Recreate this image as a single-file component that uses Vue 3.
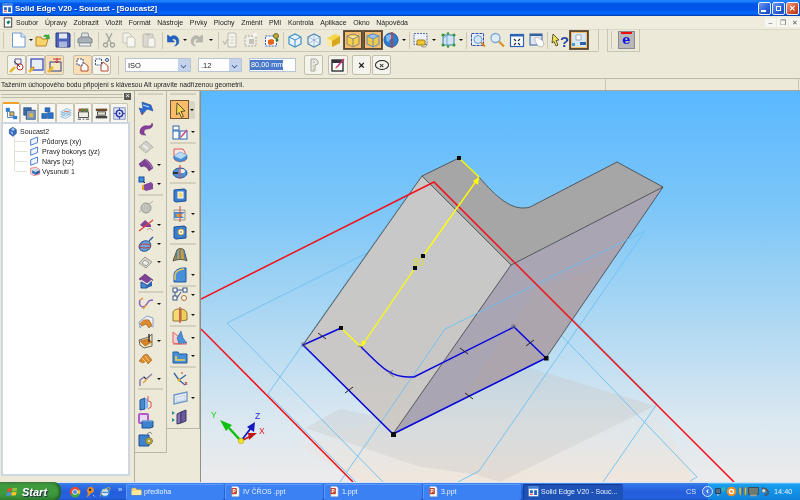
<script setup>
const I = {
  doc: '<path d="M1.5 1h9l3.500 3.500V15h-12.500z" transform="translate(1 0)" fill="#fff" stroke="#6f9bd8"/><path d="M11 1v4h4" fill="#e4edf9" stroke="#6f9bd8"/>',
  open: '<path d="M1 5h5l1 2h6l-2 7H1z" fill="#f6d36b" stroke="#b8862a"/><path d="M8 5c1-3 3-3 5-2l1-1 1 5-5 0 1.500-1.500C10.500 4.500 9 4.500 8 5z" fill="#3fa83c"/>',
  save: '<path d="M1 1h13l1 1v13H1z" fill="#4a63b8" stroke="#26387f"/><rect x="4" y="1.500" width="8" height="5" fill="#e4e8f4"/><rect x="4" y="9.500" width="8" height="5.500" fill="#aab6de"/>',
  print: '<path d="M5 1h6l1 5H4z" fill="#dfe3e6" stroke="#8d969c"/><path d="M1 7l3-2h8l3 2v4H1z" fill="#a9b1b7" stroke="#7c858c"/><path d="M3 11h10l1 3H2z" fill="#eef0f1" stroke="#8d969c"/>',
  cut: '<path d="M5 1l5 10M11 1l-5 10" stroke="#a5a59c" stroke-width="1.300" fill="none"/><circle cx="4.500" cy="13" r="2" fill="none" stroke="#a5a59c" stroke-width="1.300"/><circle cx="11.500" cy="13" r="2" fill="none" stroke="#a5a59c" stroke-width="1.300"/>',
  copy: '<path d="M2 1h6l2 2v8H2z" fill="#f2f1ea" stroke="#c5c3b7"/><path d="M6 5h6l2 2v8H6z" fill="#f7f6f0" stroke="#c5c3b7"/>',
  paste: '<rect x="2" y="2" width="10" height="13" rx="1" fill="#dcdad0" stroke="#bcbaae"/><rect x="5" y="1" width="4" height="3" fill="#c7c5ba"/><path d="M7 6h6l1 1v8H7z" fill="#f5f4ee" stroke="#c5c3b7"/>',
  undo: '<path d="M3.500 3v7h7L8 7.500C10 6 12 7 12.500 9.500c.5 2-.5 3.500-2 4.500 3.500-.5 5-3 4-6.500C13.500 3.500 9.500 2.500 6.500 5z" fill="#1f63c6" stroke="#134a9c" stroke-width=".5"/>',
  redo: '<path d="M12.500 3v7h-7L8 7.500C6 6 4 7 3.500 9.500c-.5 2 .5 3.500 2 4.500-3.500-.5-5-3-4-6.500C2.500 3.500 6.500 2.500 9.500 5z" fill="#b8b7ad" stroke="#a3a298" stroke-width=".5"/>',
  list: '<path d="M6 1h7l1 1v13H6z" fill="#f4f3ec" stroke="#bdbbaf"/><path d="M8 5h4M8 8h4M8 11h4" stroke="#cfcdc2"/><path d="M1 9l2 3 3-5" fill="none" stroke="#bdbbaf" stroke-width="1.300"/>',
  dash: '<rect x="2" y="4" width="11" height="10" fill="#efeee7" stroke="#aaa89c" stroke-dasharray="2 1"/><rect x="6" y="7" width="5" height="5" fill="#c4c2b8"/><path d="M12 1v4M10 3h4" stroke="#fff" stroke-width="1.200"/>',
  dashc: '<rect x="1.500" y="4" width="11" height="10" fill="#fff" stroke="#3a5fc0" stroke-dasharray="2 1"/><path d="M4 8l4-1 2 1v4l-4 1-2-1z" fill="#e8641c"/><circle cx="12" cy="4" r="2.500" fill="#c9a63a" stroke="#6a6a20"/><circle cx="13" cy="8" r="1.500" fill="#3d7a30"/>',
  wire: '<path d="M2 5l6-3 6 3v7l-6 3-6-3z" fill="#eaf3fb" stroke="#3d8fc9" stroke-width="1.200"/><path d="M2 5l6 3 6-3M8 8v7" fill="none" stroke="#3d8fc9"/>',
  wire2: '<path d="M2 5l6-3 6 3v7l-6 3-6-3z" fill="#f0f5fb" stroke="#4b86b8" stroke-width="1.200"/><path d="M2 5l6 3 6-3M8 8v7M8 2v6M2 12l6-4 6 4" fill="none" stroke="#7aa6cc" stroke-width=".7"/>',
  ycube: '<path d="M2 6l8-4 5 2v7l-8 4-5-3z" fill="#f5d54a"/><path d="M2 6l5 3v6l-5-3z" fill="#fbeaa0"/><path d="M7 9l8-5v7l-8 4z" fill="#d8a720"/>',
  ycube2: '<path d="M2 4l6-2 6 2v8l-6 3-6-3z" fill="#f4cf4c" stroke="#8b8676"/><path d="M2 4l6 3 6-3" fill="#fae89a" stroke="#8b8676"/><path d="M8 7v8" stroke="#8b8676"/>',
  ycube3: '<path d="M2 4l6-2 6 2v8l-6 3-6-3z" fill="#f0c84a" stroke="#5d8fc0"/><path d="M2 4l6-2 6 2-6 3z" fill="#9cc4ea" stroke="#5d8fc0"/><path d="M8 7v8" stroke="#5d8fc0"/>',
  globe: '<circle cx="8" cy="8" r="7" fill="#2c7fd0" stroke="#1c5aa0"/><path d="M3 4c2-2 6-2 7 0s-3 3-4 5-3 1-3-5z" fill="#7db8ee"/><path d="M9 0v16" stroke="#d8302a" stroke-width="1.500"/>',
  ydash: '<rect x="1" y="1.500" width="13" height="11" fill="#eef2f8" stroke="#5a6f9c" stroke-dasharray="2 1"/><rect x="4" y="8" width="8" height="5" rx="1" fill="#f3c534" stroke="#9a7a14"/><path d="M8 14c3 2 6 1 6-2" fill="none" stroke="#8f8f86"/>',
  gbox: '<path d="M3 3h11v10H3z" fill="#cfe4f4" stroke="#3d7fb8"/><path d="M7 3v10M3 7l4-4" stroke="#7aa6cc" fill="none"/><g fill="#2e9a2e"><circle cx="3" cy="3" r="1.500"/><circle cx="14" cy="3" r="1.500"/><circle cx="3" cy="13" r="1.500"/><circle cx="14" cy="13" r="1.500"/><circle cx="8" cy="1.500" r="1.200"/><circle cx="8" cy="14.500" r="1.200"/></g>',
  zarea: '<rect x="1.500" y="1.500" width="12" height="12" fill="#e8eefa" stroke="#2b4c9a" stroke-dasharray="3 1"/><circle cx="8" cy="7.500" r="4" fill="#d3e7f8" stroke="#6b9bd0"/><path d="M11 10.500l4 4" stroke="#d88a2a" stroke-width="2"/>',
  zoom: '<circle cx="6.500" cy="6" r="4.500" fill="#dcecf9" stroke="#7aa8d4" stroke-width="1.300"/><path d="M10 9.500l5 5" stroke="#d9902e" stroke-width="2.200"/>',
  fit: '<rect x="1.500" y="2.500" width="13" height="12" fill="#fff" stroke="#2a63b8" stroke-width="1.200"/><rect x="1.500" y="2" width="13" height="2.500" fill="#2a63b8"/><path d="M5 7l2 2M11 7L9 9M5 13l2-2M11 13l-2-2" stroke="#234" stroke-width="1.200"/>',
  pan: '<rect x="1" y="2" width="12" height="11" fill="#dde6f2" stroke="#33609c"/><rect x="1" y="2" width="12" height="2" fill="#33609c"/><path d="M6 6l2-1 6 4 1 3-2 3-4-1-3-5z" fill="#fff" stroke="#a5a5a5" stroke-width=".7"/>',
  helpa: '<path d="M1 2l6 6-3 .5L6 13l-2 1-2-4.500L0 11z" fill="#f2e24a" stroke="#222" stroke-width=".7"/><text x="8" y="15" font-family="Liberation Sans, sans-serif" font-weight="700" font-size="15" fill="#2a44a8">?</text>',
  twod: '<rect x="1" y="1" width="14" height="14" fill="#d7e7f4"/><rect x="9" y="10" width="6" height="3" fill="#2a62b0"/><rect x="1" y="11" width="3" height="3" fill="#4a9ad0"/><path d="M5 3h5v5H5z" fill="#fff" stroke="#9ab"/>',
  pick1: '<path d="M6 2h6v5H6z" fill="#f5f4f0" stroke="#5a5a9c"/><circle cx="11" cy="10" r="3" fill="#fff" stroke="#c03030"/><path d="M1 15l5-5" stroke="#e8b82a" stroke-width="2.500"/><path d="M5 4l6 6" stroke="#222" stroke-width=".8"/>',
  pick2: '<rect x="3" y="2" width="12" height="11" fill="#e8eef8" stroke="#3040b0" stroke-width="1.200"/><path d="M1 15l5-5" stroke="#e8b82a" stroke-width="2.500"/><path d="M5 10l1 1" stroke="#c03030"/>',
  pick3: '<rect x="3" y="5" width="11" height="9" fill="#f5e8c0" stroke="#2c3c90"/><path d="M6 2h8M10 1v4M8 4l2 2 2-2" stroke="#c03030" fill="none"/><path d="M1 15l5-5" stroke="#e8b82a" stroke-width="2.500"/>',
  hous1: '<path d="M8 5l5 4v5H6V9z" fill="#fff" stroke="#b84a30"/><rect x="2" y="2" width="6" height="6" fill="#fff" stroke="#34508c" stroke-dasharray="2 1"/>',
  hous2: '<path d="M9 5l5 4v5H7V9z" fill="#fff" stroke="#b84a30"/><rect x="1.500" y="2" width="6" height="6" fill="#fff" stroke="#34508c" stroke-dasharray="2 1"/><circle cx="13" cy="3" r="1.500" fill="none" stroke="#34508c"/>',
  dim: '<path d="M5 2h5l2 2v3l-3 1v6H5z" fill="#eceae0" stroke="#a8a69a"/><path d="M7 5h2M7 9h1M7 12h1" stroke="#a8a69a"/>',
  note: '<rect x="2" y="3" width="11" height="11" fill="#fff" stroke="#222" stroke-width="1.300"/><rect x="2" y="3" width="11" height="3" fill="#333"/><path d="M6 11l8-9" stroke="#d03080" stroke-width="1.500"/><path d="M5 12l1-2 1 1z" fill="#e0b020"/>',
  ribbon: '<path d="M4 1l9 3 2 6-6-2-5 6-3-7 4 1z" fill="#2a6ad0" stroke="#143c88" stroke-width=".5"/><path d="M5 4l6 2" stroke="#cfe2fa"/><path d="M4 14l2-3" stroke="#d05030"/>',
  twist: '<path d="M2 12c0-5 4-7 8-6 2 0 4-1 4-3 2 3-1 6-5 6-2 0-3 1-3 3 0 2 1 3 2 3-3 0-6 0-6-3z" fill="#8a3e9c" stroke="#56206c" stroke-width=".5"/>',
  diamond: '<path d="M8 2l7 6-7 6-7-6z" fill="#d0d0c8" stroke="#a09f94" stroke-dasharray="2 1"/><path d="M5 6l5 4" stroke="#efefe8" stroke-width="2"/>',
  purp: '<path d="M1 7l6-5c3 1 6 4 8 9l-4 3C9 10 6 8 3 10z" fill="#7e4394" stroke="#4c2468" stroke-width=".5"/><path d="M7 2c2 2 5 5 7 9" stroke="#b27cc4" fill="none"/>',
  purp2: '<rect x="1" y="1" width="5" height="5" fill="#3d8fe0" stroke="#1a4f9c"/><path d="M5 9l8-3 2 2v5l-7 2-3-2z" fill="#8248a0"/><path d="M5 5l2 2" stroke="#222"/><path d="M5 9v5" stroke="#e8a020" stroke-width="2"/>',
  ball: '<circle cx="8" cy="9" r="5" fill="#c0c0bc" stroke="#9a9a94"/><path d="M5 7c1-1 2-1 3 0" stroke="#eee"/><path d="M10 6l5-4M1 13l3-2" stroke="#b0b0a8"/>',
  purx: '<path d="M2 8l5-5 6 5v2H5z" fill="#7e4394"/><path d="M1 14L15 3" stroke="#e0403a" stroke-width="1.200"/><path d="M9 13l3-2 3 3" fill="none" stroke="#a5a5a0"/>',
  disc: '<ellipse cx="7" cy="10" rx="6" ry="5" transform="rotate(-25 7 10)" fill="#6ea4dc" stroke="#1f5aa4"/><ellipse cx="7" cy="10" rx="6" ry="2" fill="none" stroke="#c03838"/><path d="M11 5l4-4" stroke="#2c4c9c" stroke-width="1.200"/>',
  gdiam: '<path d="M1 9l6-6 7 5-6 6z" fill="#d4d4cc" stroke="#a0a096"/><path d="M4 9l3-3 4 3-3 3z" fill="#eeeee6" stroke="#a0a096"/>',
  roof: '<path d="M1 6l6-5 8 6-6 4z" fill="#7e4394" stroke="#3a1a54" stroke-width=".5"/><path d="M3 9l6 3v3H3z" fill="#4c8ad0" stroke="#1f4f9a"/><path d="M9 12l5-4v5l-5 2z" fill="#2a64b0"/><path d="M3 7l6 4 5-4" stroke="#fff" fill="none"/>',
  curve: '<path d="M2 4c-2 6 3 9 6 5s3-5 7-5" fill="none" stroke="#8b5fc0" stroke-width="1.500"/><path d="M2 4l3-2" stroke="#e09030" stroke-width="1.500"/><path d="M5 13l3-4" stroke="#e0a040" stroke-width="1.500"/>',
  sweep: '<path d="M1 8l8-6 6 2v9L5 9l-3 5z" fill="#f3eef0" stroke="#8aa0c8"/><path d="M2 10c2-4 6-5 9-4l3 5-3 3-3-4-4 2z" fill="#de8a2c" stroke="#8a5018" stroke-width=".5"/>',
  sweep2: '<path d="M1 7l10-3 3-3v12l-8 2-4-3z" fill="#f4e8b8" stroke="#666"/><path d="M2 8l8-2 4 3-7 4z" fill="#d88426" stroke="#8a5018" stroke-width=".5"/><path d="M11 1v8" stroke="#222" stroke-width="1.300"/>',
  sweep3: '<path d="M1 10l5-6 3-1 5 6-4 4-2-3-3 2z" fill="#dc8a2a" stroke="#885016" stroke-width=".5"/><path d="M4 7l5 5M7 5l4 5" stroke="#f5cc80"/>',
  branch: '<path d="M2 15V9l4-3 2 2 6-5" fill="none" stroke="#8b7cac" stroke-width="1.500"/><path d="M5 12l4-4" stroke="#e0a040" stroke-width="1.500"/><path d="M6 6l2 2" stroke="#222"/>',
  bfold: '<path d="M2 5l5-2v11l-5 1z" fill="#4a88d0" stroke="#1f4f9a"/><path d="M7 3l3 1v9l-3 1z" fill="#8ab8ea"/><path d="M10 1v5l3 1v5l-3 2" fill="none" stroke="#d85050"/>',
  bpurp: '<rect x="1" y="1" width="9" height="9" rx="1" fill="#e8d8f0" stroke="#b05cc8" stroke-width="2"/><path d="M4 8h11v6l-3 1H4z" fill="#3c82cc" stroke="#1f4f9a"/><path d="M4 8h11" stroke="#8cc0ee"/>',
  bgear: '<path d="M1 4h10v11H1z" fill="#3c82cc" stroke="#1f4f9a"/><circle cx="11" cy="10" r="3.500" fill="#b0a038" stroke="#555" stroke-dasharray="1 1"/><circle cx="11" cy="10" r="1" fill="#eee"/><path d="M9 3l3-2 2 2" fill="none" stroke="#888"/>',
  arrow: '<path d="M5 1l8 8-4 .5 2.500 5-2 1L7 10.500 4.500 13z" fill="#f3d94a" stroke="#333" stroke-width=".8"/>',
  plan: '<rect x="1" y="2" width="6" height="4" fill="#fff" stroke="#2a64b8"/><rect x="1" y="7" width="6" height="8" fill="#fff" stroke="#2a64b8"/><rect x="8" y="7" width="7" height="8" fill="#fff" stroke="#2a64b8"/><path d="M9 13l6-7" stroke="#d04080" stroke-width="1.400"/><path d="M8 14l1-1 1 1z" fill="#e0b020"/>',
  prot: '<path d="M2 2h9l2 3v9H4l-2-3z" fill="#f5e6e6" stroke="#e05858"/><path d="M2 9l6-4 7 3v4l-7 3-6-3z" fill="#4a90d8" stroke="#1f5aa0" stroke-width=".5"/><path d="M2 9l7 3 6-4-7-3z" fill="#b8d8f2"/>',
  revo: '<ellipse cx="8" cy="9" rx="7" ry="5" fill="#4a90d8" stroke="#1f5aa0"/><ellipse cx="10" cy="7" rx="3" ry="2" fill="#eee"/><path d="M1 9h5" stroke="#333" stroke-width="2"/><path d="M8 1v14" stroke="#e05050" stroke-width="1.300"/>',
  boss: '<path d="M2 3l10-1 2 1v11l-10 1-2-1z" fill="#3a7ecc" stroke="#1c4f9a"/><rect x="6" y="5" width="5" height="6" fill="#f4d76a" stroke="#fff"/>',
  hole: '<path d="M2 4h11v10H2z" fill="#e8e4d8" stroke="#9a9a90"/><path d="M2 6h11l-4 3 3 3H2z" fill="#4c8ad0"/><path d="M4 8h7l-3 2 2 1H5z" fill="#d8a030"/><path d="M8 0v16" stroke="#e04040"/>',
  ring: '<path d="M2 3l10-1 2 1v11l-10 1-2-1z" fill="#3a7ecc" stroke="#1c4f9a"/><circle cx="9" cy="8" r="3" fill="#fff" stroke="#c8a040"/><circle cx="9" cy="8" r="1" fill="#c8a040"/>',
  tent: '<path d="M1 14L5 3c2-2 5-2 7 0l3 11c-3-2-10-2-14 0z" fill="#c89a3c" stroke="#50503c"/><path d="M8 2v10M5 3l-1 10M12 3l1 10" stroke="#3a7ecc" stroke-width="1.200"/>',
  bowl: '<path d="M2 15V8C2 4 6 1 12 1h2v14z" fill="#4a90d8" stroke="#1f5aa0"/><path d="M3 13V8c0-3 4-6 9-6" fill="none" stroke="#e8c860" stroke-width="1.500"/>',
  nodes: '<g fill="#fff" stroke="#35508c"><rect x="1" y="1" width="4" height="4"/><rect x="11" y="1" width="4" height="4"/><rect x="1" y="9" width="4" height="4"/><circle cx="12" cy="11" r="2.500" stroke="#a86a20"/></g><path d="M5 3h6M3 5v4M5 11l4-6" stroke="#35508c" fill="none"/>',
  yhalf: '<path d="M1 14V6c0-3 3-4 6-4h1v12z" fill="#f4da70" stroke="#8a7a3a"/><path d="M9 2c3 0 6 2 6 5v6l-6 1z" fill="#f0cd5a" stroke="#8a7a3a"/><path d="M8 0v16" stroke="#e04040" stroke-width="1.300"/>',
  sheet: '<path d="M1 2l6 5v7l-6-1z" fill="#f6d0d0" stroke="#e06060"/><path d="M5 8l4-7 2 7 4 5-8 1z" fill="#4a90d8" stroke="#1f5aa0" stroke-width=".5"/><path d="M1 14h14" stroke="#e06060"/>',
  flange: '<path d="M1 4h5l1 2h8v9H1z" fill="#4a90d8" stroke="#1f5aa0"/><path d="M4 8v4h9" fill="none" stroke="#f0d040" stroke-width="1.600"/>',
  triad: '<path d="M7 9L2 2M7 9l7-5M7 9l6 5" stroke="#3464a8" stroke-width="1.300"/><circle cx="7" cy="9" r="1.500" fill="#e0b020"/><path d="M9 2h2M13 11l2 3M13 14l2-3" stroke="#c04040"/>',
  panel: '<path d="M2 5l13-3v9L2 14z" fill="#f3f4f6" stroke="#6a94c8" stroke-width="1.300"/><path d="M4 7l9-2v5l-9 2z" fill="#dde8f4" stroke="#a0b8d4" stroke-width=".5"/>',
  fold: '<path d="M0 2l3 2-3 2zM0 9l3 2-3 2z" fill="#2a8fa0"/><path d="M5 5l4-2v11l-4 1z" fill="#8a70b0" stroke="#3c3868"/><path d="M9 3l5-2v11l-5 2z" fill="#6a5a9c" stroke="#3c3868"/>',
  tree1: '<rect x="1" y="1" width="5" height="5" fill="#2f7fd0"/><rect x="6" y="6" width="5" height="5" fill="#e8b83a" stroke="#2a5fa8"/><rect x="10" y="11" width="5" height="4" fill="#2f7fd0"/><path d="M3 6v7h7" stroke="#3c6a9c" fill="none"/>',
  tree2: '<rect x="1" y="1" width="9" height="9" fill="#3c70b0" stroke="#234a80"/><rect x="4" y="4" width="11" height="11" fill="#8a9db8" stroke="#234a80"/><rect x="8" y="8" width="4" height="4" fill="#e8c030"/>',
  tree3: '<path d="M5 1h6v5H5zM1 8h6v6H1zM8 7h7v7H8z" fill="#2a72cc" stroke="#174c94" stroke-width=".7"/>',
  tree4: '<path d="M2 6l7-4 6 2-7 4z M2 9l7-4 6 2-7 4z M2 12l7-4 6 2-7 4z" fill="#e6f0f8" stroke="#6ea8d4" stroke-width=".8"/><path d="M6 5l6 1" stroke="#e06a40"/>',
  tree5: '<rect x="2" y="2" width="12" height="3" fill="#c04040"/><rect x="5" y="2" width="3" height="5" fill="#3c9c3c"/><rect x="10" y="2" width="3" height="5" fill="#3c9c3c"/><rect x="2" y="6" width="12" height="7" fill="#f0eee4" stroke="#333"/><path d="M1 15h4M7 15h2M11 15h4" stroke="#333"/>',
  tree6: '<rect x="1" y="2" width="14" height="3" fill="#6a4a2a"/><rect x="3" y="6" width="10" height="4" fill="#e8e4d4" stroke="#333"/><rect x="1" y="11" width="14" height="3" fill="#444"/>',
  tree7: '<rect x="1" y="1" width="14" height="14" fill="#dfe6f8" stroke="#6c7cb8"/><circle cx="8" cy="8" r="4" fill="#fff" stroke="#2c3ea8" stroke-width="2"/><circle cx="8" cy="8" r="1.400" fill="#2c3ea8"/><path d="M8 1v3M8 12v3M1 8h3M12 8h3" stroke="#2c3ea8"/>',
  root: '<path d="M2 5l5-3 5 3v6l-5 4-5-4z" fill="#3a6fc0" stroke="#1d4a8f"/><path d="M5 4l3-1 2 2-2 2-3-1zM3 8l4 1v4z" fill="#a9c5ea"/>',
  plane: '<path d="M1 5.500l10-4v8l-10 4z" fill="#eef5ff" stroke="#1c58c8" stroke-width="1.100"/>',
  ext: '<path d="M1 3l8-1 5 3v7l-9 2-4-3z" fill="#f8e0e0" stroke="#e06060"/><path d="M3 6l6-2 5 2-6 3z" fill="#b6d4f0"/><path d="M3 6l5 3v4l-5-3z" fill="#3070c0"/><path d="M8 9l6-3v4l-6 3z" fill="#1f5aa0"/>',
  mfile: '<rect x="1.500" y="1" width="9" height="11" fill="#fff" stroke="#222"/><path d="M4 6l3-2 2 2-3 3z" fill="#167a6a"/>',
  win: '<rect x="1" y="1" width="14" height="14" fill="#f4f8ff"/><rect x="1" y="1" width="14" height="3" fill="#3b7cd8"/><path d="M3 6l4 0v4H3zM9 6h4v7H9z" fill="#1c60b8"/><path d="M3 11h4v2H3z" fill="#e05050"/>',
  ppt: '<path d="M3 1h8l2 2v12H3z" fill="#fff" stroke="#d8cfc4"/><rect x="2" y="3" width="8" height="9" rx="1" fill="#c2432c"/><text x="3.500" y="10.500" font-family="Liberation Sans, sans-serif" font-weight="700" font-size="7" fill="#fff">P</text>',
  folder: '<path d="M1 4l1-1h5l1 2h6l1 1v7H1z" fill="#f5d878" stroke="#b89640" stroke-width=".7"/><path d="M1 7h14v6H1z" fill="#fbe79e"/>',
  chrome: '<circle cx="8" cy="8" r="7" fill="#e8482e"/><path d="M8 8l6.500 3A7 7 0 0 1 2 12z" fill="#3da54a"/><path d="M8 8l6.500 3A7 7 0 0 0 14.700 5.500H8z" fill="#f6c526"/><circle cx="8" cy="8" r="3.300" fill="#4a8ee6" stroke="#fff"/>',
  gimp: '<path d="M8 1c4 0 6 3 5 6-1 3-4 2-5 4-1 2-3 4-5 3 2-1 2-2 2-4s-1-2-1-4 2-5 4-5z" fill="#e88a2a"/><circle cx="8" cy="5" r="1.500" fill="#222"/><path d="M12 12l2 2" stroke="#ddd"/>',
  ie: '<circle cx="8" cy="8.500" r="5.500" fill="#cfe6fb" stroke="#2f82d8" stroke-width="2"/><path d="M4 8.500h8" stroke="#2f82d8" stroke-width="1.500"/><path d="M2 14c-1-3 5-10 11-12 2 0 2 2 1 4" fill="none" stroke="#e8b830" stroke-width="1.200"/>',
  xp: '<path d="M1 4c3-2 4 0 6-1l-1 5C4 9 3 7 0 9z" fill="#e8502e"/><path d="M8 3c2-1 4 1 7-1l-1 5c-3 2-5 0-7 1z" fill="#8ac43c"/><path d="M0 10c3-2 4 0 6-1l-1 5c-2 1-3-1-6 1z" fill="#4a90e0"/><path d="M7 9c2-1 4 1 7-1l-1 5c-3 2-5 0-7 1z" fill="#f6c52a"/>',
  net: '<rect x="1" y="4" width="7" height="7" fill="#5a6f8c" stroke="#223"/><rect x="3" y="12" width="3" height="2" fill="#bbb"/><path d="M10 7c1-1 1-3 0-4M12 8c2-2 2-5 0-7" stroke="#7ce05c" fill="none"/>',
  oring: '<circle cx="8" cy="8" r="7" fill="#f08a20"/><circle cx="8" cy="8" r="3" fill="none" stroke="#fff" stroke-width="2"/>',
  tune: '<path d="M3 2v8c0 3 3 4 3 4V2zM11 2v12s3-1 3-4V2z" fill="#e8b83a" stroke="#6a5a2a" stroke-width=".5"/><path d="M8 1v11" stroke="#3a5fb0" stroke-width="1.500"/>',
  disp: '<rect x="1" y="2" width="14" height="10" fill="#6e7a70" stroke="#333"/><rect x="3" y="12" width="10" height="3" fill="#9a9a90"/>',
  vol: '<path d="M4 3c4 0 8 2 9 5s-1 6-5 5" fill="none" stroke="#555" stroke-width="2.500"/><circle cx="7" cy="7" r="3" fill="#ddd" stroke="#555"/>'
}

const btn = (c, i, on, w = 18) => ({ k: 'btn', c, i, on, w })
const drop = c => ({ k: 'drop', c, w: 5 })
const sep = (c, w = 1) => ({ k: 'sep', c, w })

function flow(items, start = 0) {
  let pos = start
  return items.map(it => {
    const from = it.c - it.w / 2
    const out = { ...it, gap: from - pos }
    pos = from + it.w
    return out
  })
}

const row1 = flow([
  sep(3), btn(18, 'doc'), drop(31), btn(44, 'open'), btn(64, 'save'), sep(75), btn(86, 'print'), sep(99), btn(110, 'cut'), btn(130, 'copy'), btn(150, 'paste'),
  sep(163), btn(173, 'undo'), drop(186), btn(200, 'redo'), drop(213), sep(221), btn(233, 'list'), btn(254, 'dash'), btn(275, 'dashc'), sep(286),
  btn(298, 'wire'), btn(317, 'wire2'), btn(336, 'ycube'), btn(356, 'ycube2', 1), btn(375.500, 'ycube3', 1), btn(394, 'globe'), drop(407), sep(413), btn(425, 'ydash'), drop(438), btn(453, 'gbox'), drop(466), sep(472),
  btn(484, 'zarea'), btn(503, 'zoom'), btn(523, 'fit'), btn(543, 'pan'), sep(553), btn(566, 'helpa'), btn(585, 'twod', 1)
])

const row2 = [
  { i: 'pick1', w: 19 }, { i: 'pick2', w: 19 }, { i: 'pick3', w: 19, soft: 1 }
]
const row2b = [
  { i: 'hous1', w: 19, soft: 1 }, { i: 'hous2', w: 19 }
]

const col1 = flow([
  sep(93, 2), btn(108, 'ribbon'), btn(127, 'twist'), btn(146, 'diamond'), { ...btn(164, 'purp'), a: 1 }, { ...btn(183, 'purp2'), a: 1 }, sep(194, 2),
  btn(206, 'ball'), { ...btn(224, 'purx'), a: 1 }, { ...btn(243, 'disc'), a: 1 }, { ...btn(261, 'gdiam'), a: 1 }, btn(280, 'roof'), sep(291, 2),
  { ...btn(303, 'curve'), a: 1 }, btn(321, 'sweep'), { ...btn(340, 'sweep2'), a: 1 }, btn(358, 'sweep3'), { ...btn(378, 'branch'), a: 1 }, sep(388, 2),
  btn(402, 'bfold'), btn(420, 'bpurp'), btn(438, 'bgear')
], 90)

const col2 = flow([
  sep(93, 2), { ...btn(108.500, 'arrow', 1, 19), a: 2 }, { ...btn(131, 'plan'), a: 1 }, sep(142, 2),
  btn(154, 'prot'), { ...btn(171, 'revo'), a: 1 }, sep(182, 2),
  btn(194, 'boss'), { ...btn(213, 'hole'), a: 1 }, { ...btn(231, 'ring'), a: 1 }, sep(243, 2),
  btn(254, 'tent'), { ...btn(274, 'bowl'), a: 1 }, sep(285, 2),
  { ...btn(294, 'nodes'), a: 1 }, { ...btn(314, 'yhalf'), a: 1 }, sep(325, 2),
  { ...btn(337, 'sheet'), a: 1 }, { ...btn(355, 'flange'), a: 1 }, sep(366, 2),
  btn(378, 'triad'), { ...btn(397, 'panel'), a: 1 }, btn(416, 'fold')
], 90)

const menu = ['Soubor', 'Úpravy', 'Zobrazit', 'Vložit', 'Formát', 'Nástroje', 'Prvky', 'Plochy', 'Změnit', 'PMI', 'Kontrola', 'Aplikace', 'Okno', 'Nápověda']
const tabs = ['tree1', 'tree2', 'tree3', 'tree4', 'tree5', 'tree6', 'tree7']
const tree = [
  { t: 'Půdorys (xy)', i: 'plane' }, { t: 'Pravý bokorys (yz)', i: 'plane' }, { t: 'Nárys (xz)', i: 'plane' }, { t: 'Vysunutí 1', i: 'ext' }
]
const tasks = [
  { t: 'předloha', i: 'folder' }, { t: 'IV ČŘOS .ppt', i: 'ppt' }, { t: '1.ppt', i: 'ppt' }, { t: '3.ppt', i: 'ppt' }, { t: 'Solid Edge V20 - Souc...', i: 'win', on: 1 }
]
const ticks = [[322, 335, 1], [349, 389, -1], [464, 350, 1], [469, 395, 1], [530, 342, -1]]
</script>

<template>
  <div class="app">
    <header class="title">
      <svg class="ic t" viewBox="0 0 16 16" v-html="I.win"></svg>
      <span class="title-text">Solid Edge V20 - Soucast - [Soucast2]</span>
      <span class="wb blue"><i class="w-min"></i></span>
      <span class="wb blue"><i class="w-max"></i></span>
      <span class="wb red">✕</span>
    </header>

    <nav class="menu">
      <svg class="mfile" viewBox="0 0 12 13" v-html="I.mfile"></svg>
      <span v-for="m in menu" :key="m" class="mi">{{ m }}</span>
      <span class="mdi">
        <b class="mb">–</b><b class="mb">❐</b><b class="mb">✕</b>
      </span>
    </nav>

    <div class="row1">
      <div class="tb1">
        <template v-for="(it, n) in row1" :key="n">
          <span v-if="it.k === 'sep'" class="vsep" :style="{ marginLeft: it.gap + 'px' }"></span>
          <span v-else-if="it.k === 'drop'" class="drop" :style="{ marginLeft: it.gap + 'px' }"></span>
          <span v-else class="tool" :class="{ on: it.on }" :style="{ marginLeft: it.gap + 'px' }">
            <svg class="ic" viewBox="0 0 16 16" v-html="I[it.i]"></svg>
          </span>
        </template>
      </div>
      <div class="tb2">
        <span class="grip"></span>
        <span class="elogo"><i></i>e</span>
      </div>
    </div>

    <div class="row2">
      <div class="group g1">
        <span v-for="b in row2" :key="b.i" class="raised" :class="{ soft: b.soft }"><svg class="ic" viewBox="0 0 16 16" v-html="I[b.i]"></svg></span>
      </div>
      <div class="group g2">
        <span v-for="b in row2b" :key="b.i" class="raised" :class="{ soft: b.soft }"><svg class="ic" viewBox="0 0 16 16" v-html="I[b.i]"></svg></span>
      </div>
      <span class="vsep tall"></span>
      <div class="select s1"><span>ISO</span><i class="caret"></i></div>
      <div class="select s2"><span>.12</span><i class="caret"></i></div>
      <div class="value"><span class="hl">80,00 mm</span></div>
      <span class="raised r1"><svg class="ic" viewBox="0 0 16 16" v-html="I.dim"></svg></span>
      <span class="raised r2"><svg class="ic" viewBox="0 0 16 16" v-html="I.note"></svg></span>
      <span class="raised r3"><b>×</b></span>
      <span class="raised r4"><b class="circ">×</b></span>
    </div>

    <div class="status">
      <span class="st1">Tažením úchopového bodu připojení s klávesou Alt upravíte nadřízenou geometrii.</span>
      <span class="st2"></span>
    </div>

    <main class="work">
      <aside class="left">
        <div class="lhead"><span class="lgrip"></span><span class="lclose">×</span></div>
        <div class="tabs">
          <span v-for="(t, n) in tabs" :key="t" class="tab" :class="{ act: n === 0 }"><svg class="ic" viewBox="0 0 16 16" v-html="I[t]"></svg></span>
        </div>
        <div class="tree">
          <div class="trow root"><svg class="ic" viewBox="0 0 16 16" v-html="I.root"></svg><span>Soucast2</span></div>
          <div class="tlist">
            <div v-for="r in tree" :key="r.t" class="trow leaf"><i class="tl"></i><svg class="ic s" viewBox="0 0 16 16" v-html="I[r.i]"></svg><span>{{ r.t }}</span></div>
          </div>
        </div>
      </aside>

      <div class="col c1">
        <div class="colin">
          <template v-for="(it, n) in col1" :key="n">
            <span v-if="it.k === 'sep'" class="hsep" :style="{ marginTop: it.gap + 'px' }"></span>
            <div v-else class="slot" :style="{ marginTop: it.gap + 'px' }">
              <svg class="ic" viewBox="0 0 16 16" v-html="I[it.i]"></svg>
              <span v-if="it.a" class="drop"></span>
            </div>
          </template>
        </div>
      </div>
      <div class="col c2">
        <div class="colin">
          <template v-for="(it, n) in col2" :key="n">
            <span v-if="it.k === 'sep'" class="hsep" :style="{ marginTop: it.gap + 'px' }"></span>
            <div v-else class="slot" :class="{ sel: it.on }" :style="{ marginTop: it.gap + 'px' }">
              <span v-if="it.on" class="selbox"><svg class="ic" viewBox="0 0 16 16" v-html="I[it.i]"></svg></span>
              <svg v-else class="ic" viewBox="0 0 16 16" v-html="I[it.i]"></svg>
              <span v-if="it.a" class="drop" :class="{ pill: it.a === 2 }"></span>
            </div>
          </template>
        </div>
      </div>

      <svg class="canvas" viewBox="201 90 599 391">
        <defs>
          <linearGradient id="sky" x1="0" y1="0" x2="0" y2="1">
            <stop offset="0" stop-color="#5ab8ff" />
            <stop offset=".3" stop-color="#7cc6f8" />
            <stop offset=".62" stop-color="#b4daf2" />
            <stop offset=".85" stop-color="#dce8f0" />
            <stop offset="1" stop-color="#ecebec" />
          </linearGradient>
          <linearGradient id="floor" x1="0" y1="0" x2="0" y2="1">
            <stop offset="0" stop-color="#e6e0d6" stop-opacity="0" />
            <stop offset=".65" stop-color="#e8e2d8" stop-opacity=".3" />
            <stop offset="1" stop-color="#f0e6dc" stop-opacity=".95" />
          </linearGradient>
          <linearGradient id="lf" x1="0" y1="0" x2="0" y2="1">
            <stop offset="0" stop-color="#c8c8c8" />
            <stop offset=".7" stop-color="#c9c8c7" />
            <stop offset="1" stop-color="#cfcac5" />
          </linearGradient>
        </defs>
        <rect x="201" y="90" width="599" height="391" fill="url(#sky)" />
        <path d="M300 445L530 366L655 405L695 481H360z" fill="url(#floor)" />
        <path d="M305 427L340 408L392 418L530 367L655 405L500 481L478 474L417 465z" fill="#b9b8b0" opacity=".22" />

        <g fill="none" stroke="#6cc0f2" stroke-width=".9">
          <path d="M425 169L268 393L356 481" />
          <path d="M425 169L657 403L603 481" />
          <path d="M445 213L227 322L383 481" />
          <path d="M445 213L697 476L690 480" />
        </g>

        <path d="M422 175L511 264L393 433L303 344z" fill="url(#lf)" />
        <path d="M422 175L459 157L479 176C497 197 510 207 523 207C528 207 531 206 534 204L617 161L663 186L511 264z" fill="#a6a6a6" />
        <path d="M511 264L663 186L546 357L393 433z" fill="#a9a5b3" />
        <path d="M537 287L603 266L546 357L460 400z" fill="#b8a4a0" opacity=".28" />
        <path d="M422 175L459 157L479 176C497 197 510 207 523 207C528 207 531 206 534 204L617 161L663 186L546 357L393 433L303 344z" fill="none" stroke="#4c4c4c" stroke-width=".9" />
        <path d="M422 175L511 264L393 433M511 264L663 186" fill="none" stroke="#4c4c4c" stroke-width=".9" />

        <g fill="none" stroke="#6cc0f2" stroke-width=".9">
          <path d="M340 481L445 328L645 230L479 470L458 481" />
        </g>

        <g fill="none" stroke="#f2101a" stroke-width="1.500">
          <path d="M201 298L434 181L734 481" />
          <path d="M201 328L353 481" />
        </g>

        <g fill="none" stroke="#ffff00" stroke-width="1.300">
          <path d="M341 327L361 346" />
          <path d="M361 346L415 267M423 255L479 176" />
          <path d="M459 157L479 176" />
        </g>
        <path d="M361 346L362 339L366 342z" fill="#ffff00" />
        <path d="M479 176L478 184L473 180z" fill="#ffff00" />
        <text x="413" y="265" class="dimtext">80</text>

        <path d="M361 346C378 362 388 376 408 376L414 376L514 326L546 357L393 433L303 344L341 327" fill="none" stroke="#0a0ade" stroke-width="1.500" />

        <g stroke="#222" stroke-width="1">
          <path v-for="t in ticks" :key="t[0]" :d="`M${t[0] - 4} ${t[1] - 3 * t[2]}L${t[0] + 4} ${t[1] + 3 * t[2]}`" />
        </g>
        <g fill="#0b0b0b">
          <rect x="457" y="155" width="4" height="4" />
          <rect x="339" y="325" width="4" height="4" />
          <rect x="391" y="431" width="5" height="5" />
          <rect x="544" y="355" width="4.500" height="4.500" />
          <rect x="413" y="265" width="4" height="4" />
          <rect x="421" y="253" width="4" height="4" />
        </g>
        <g fill="none" stroke="#666" stroke-width=".8">
          <rect x="302" y="342" width="3" height="3" />
          <rect x="512" y="324" width="3" height="3" />
          <path d="M393 369L389 372L394 376" />
          <path d="M358 345L363 346" />
        </g>

        <path d="M241 440L229 427" stroke="#10c010" stroke-width="2.500" />
        <path d="M220 419L232 424L226 430z" fill="#10c010" />
        <path d="M241 440L251 427" stroke="#1818c0" stroke-width="1.800" />
        <path d="M255 421L254 431L247 426z" fill="#1818c0" />
        <path d="M241 440L251 435" stroke="#c01818" stroke-width="1.800" />
        <path d="M257 432L249 439L248 432z" fill="#c01818" />
        <circle cx="241" cy="440" r="2.800" fill="#f0e020" stroke="#a8a020" stroke-width=".5" />
        <text x="211" y="417" class="ax y">Y</text>
        <text x="255" y="418" class="ax z">Z</text>
        <text x="259" y="433" class="ax x">X</text>
      </svg>
    </main>

    <footer class="task">
      <div class="start"><svg class="ic sx" viewBox="0 0 16 16" v-html="I.xp"></svg><span>Start</span></div>
      <div class="quick">
        <svg class="ic" viewBox="0 0 16 16" v-html="I.chrome"></svg>
        <svg class="ic" viewBox="0 0 16 16" v-html="I.gimp"></svg>
        <svg class="ic" viewBox="0 0 16 16" v-html="I.ie"></svg>
        <span class="more">»</span>
      </div>
      <div class="tasks">
        <div v-for="t in tasks" :key="t.t" class="tbtn" :class="{ on: t.on }">
          <svg class="ic" viewBox="0 0 16 16" v-html="I[t.i]"></svg><span>{{ t.t }}</span>
        </div>
      </div>
      <span class="lang">CS</span>
      <div class="tray">
        <span class="chev">‹</span>
        <svg class="ic" viewBox="0 0 16 16" v-html="I.net"></svg>
        <svg class="ic" viewBox="0 0 16 16" v-html="I.oring"></svg>
        <svg class="ic" viewBox="0 0 16 16" v-html="I.tune"></svg>
        <svg class="ic" viewBox="0 0 16 16" v-html="I.disp"></svg>
        <svg class="ic" viewBox="0 0 16 16" v-html="I.vol"></svg>
        <span class="clock">14:40</span>
      </div>
    </footer>
  </div>
</template>

<style>
html, body { margin: 0; background: #ece9d8; overflow: hidden; }
</style>

<style scoped>
.app { width: 800px; height: 500px; display: flex; flex-direction: column; overflow: hidden; background: #ece9d8; font-family: "Liberation Sans", Arial, sans-serif; color: #222; filter: blur(.45px); }
.ic { width: 16px; height: 16px; display: block; flex: none; overflow: visible; }

.title { height: 16px; flex: none; display: flex; align-items: center; padding: 0 1px 0 2px; color: #fff; background: linear-gradient(180deg, #0058ee 0%, #3593ff 5%, #1a80ff 10%, #0262ee 18%, #0054e3 28%, #0055eb 58%, #005bf5 70%, #026afe 80%, #0062ef 88%, #0052d6 94%, #003092 100%); }
.ic.t { width: 11px; height: 11px; margin-right: 2px; }
.title-text { font-size: 7.900px; font-weight: 700; flex: 1; text-shadow: .5px .5px 0 #0c3aa0; }
.wb { width: 13px; height: 13px; margin-left: 1px; border-radius: 2px; border: 1px solid #e6eefb; box-sizing: border-box; display: flex; align-items: center; justify-content: center; font-size: 8px; font-weight: 700; position: relative; }
.wb.blue { background: linear-gradient(135deg, #6d9cf2, #2a5fd8 60%, #1d47ba); }
.wb.red { background: linear-gradient(135deg, #ee9c82, #d9552f 55%, #b8371a); }
.w-min { position: absolute; left: 2px; bottom: 2px; width: 5px; height: 2px; background: #fff; }
.w-max { position: absolute; left: 3px; top: 3px; width: 5px; height: 5px; border: 1px solid #fff; box-sizing: border-box; }

.menu { height: 13px; flex: none; display: flex; align-items: center; font-size: 6.950px; padding-left: 3px; background: #efecdd; border-bottom: 1px solid #dcd9c8; box-sizing: content-box; margin-bottom: -1px; }
.mfile { width: 10px; height: 11px; margin-right: 3px; }
.mi { margin-right: 6.600px; white-space: nowrap; }
.mdi { margin-left: auto; display: flex; gap: 1px; }
.mb { width: 11px; height: 9px; background: #f7f6f0; display: flex; align-items: center; justify-content: center; font-size: 7px; font-weight: 400; color: #555; }

.row1 { height: 23px; flex: none; display: flex; align-items: center; position: relative; box-sizing: border-box; }
.tb1 { width: 599px; height: 23px; display: flex; align-items: center; border-right: 1px solid #c8c5b2; border-bottom: 1px solid #c8c5b2; border-radius: 0 0 2px 0; box-sizing: border-box; }
.tb2 { margin-left: 8px; width: 33px; height: 23px; display: flex; align-items: center; border: solid #c8c5b2; border-width: 0 1px 1px 1px; box-sizing: border-box; }
.grip { width: 1px; height: 18px; background: #c8c5b2; margin-left: 3px; }
.elogo { width: 15px; height: 16px; margin-left: 6px; background: #b8b8b8; border: 1px solid #8a8a8a; color: #1212e6; font-weight: 700; font-size: 13px; line-height: 16px; text-align: center; position: relative; font-family: "DejaVu Serif", serif; box-sizing: content-box; }
.elogo i { position: absolute; left: 2px; right: 2px; top: 0; height: 2px; background: #e81010; }
.tool { width: 18px; height: 18px; display: flex; align-items: center; justify-content: center; flex: none; }
.tool.on { box-shadow: inset 0 0 0 1px #5a4a34; background: #f6bd72; outline: 1px solid #6a5a44; outline-offset: 0; }
.vsep { width: 1px; height: 17px; background: #cbc8b6; flex: none; }
.vsep.tall { height: 19px; margin-left: 7px; }
.drop { width: 0; height: 0; border: solid transparent; border-width: 2.500px 2.500px 0 2.500px; border-top-color: #111; flex: none; }
.slot .drop { margin-left: 3px; }
.drop.pill { border: 0; width: 6px; height: 18px; background: #d8d5c6; border-radius: 0 2px 2px 0; position: relative; margin-left: 0; }
.drop.pill::after { content: ""; position: absolute; left: 1px; top: 8px; border: solid transparent; border-width: 2.500px 2.500px 0 2.500px; border-top-color: #111; }

.row2 { height: 27px; flex: none; display: flex; align-items: center; padding-left: 7px; border-bottom: 1px solid #bcb9a8; box-sizing: border-box; }
.group { display: flex; flex: none; }
.g2 { margin-left: 9px; }
.raised { width: 19px; height: 20px; flex: none; display: flex; align-items: center; justify-content: center; background: #f5f4ec; border: 1px solid #c2bfad; border-radius: 2px; box-sizing: border-box; }
.raised.soft { background: #fbdfb6; }
.select { height: 14px; background: #fff; border: 1px solid #b7c4d6; display: flex; align-items: center; justify-content: space-between; font-size: 7.500px; box-sizing: border-box; padding-left: 2px; flex: none; }
.s1 { width: 66px; margin-left: 6px; }
.s2 { width: 44px; margin-left: 7px; }
.caret { width: 12px; height: 12px; background: #c4d2ec; position: relative; }
.caret::after { content: ""; position: absolute; left: 3px; top: 4px; width: 4px; height: 4px; border: solid #2c4c88; border-width: 0 1.300px 1.300px 0; transform: rotate(45deg) scale(.8); }
.value { width: 47px; height: 14px; margin-left: 7px; background: #fff; border: 1px solid #b7c4d6; box-sizing: border-box; display: flex; align-items: center; font-size: 7.300px; flex: none; }
.hl { background: #4a78c8; color: #fff; padding: 0 0 0 1px; height: 10px; line-height: 10px; }
.r1 { margin-left: 8px; }
.r2 { margin-left: 5px; width: 20px; }
.r3 { margin-left: 4px; }
.r4 { margin-left: 1px; }
.r3 b { font-size: 11px; color: #111; }
.circ { width: 12px; height: 8px; border: 1px solid #222; border-radius: 50%; display: flex; align-items: center; justify-content: center; font-size: 8px; }

.status { height: 12px; flex: none; display: flex; font-size: 6.700px; align-items: center; border-bottom: 1px solid #aaa795; box-sizing: border-box; background: #ece9d8; }
.st1 { width: 606px; padding-left: 1px; border-right: 1px solid #c8c5b4; box-sizing: border-box; line-height: 11px; white-space: nowrap; }
.st2 { flex: 1; border-right: 1px solid #c8c5b4; height: 11px; margin-right: 1px; }

.work { flex: none; height: 391px; display: flex; }
.left { width: 135px; flex: none; display: flex; flex-direction: column; border-right: 1px solid #b3b09e; box-sizing: border-box; }
.lhead { height: 10px; display: flex; align-items: center; padding: 0 3px 0 1px; flex: none; }
.lgrip { flex: 1; height: 2px; border-top: 1px solid #bdbaa8; border-bottom: 1px solid #bdbaa8; }
.lclose { width: 7px; height: 7px; margin-left: 1px; background: #5a5a50; color: #fff; font-size: 8px; line-height: 6px; text-align: center; }
.tabs { height: 21px; display: flex; padding-left: 2px; flex: none; align-items: flex-end; }
.tab { width: 18px; height: 19px; display: flex; align-items: center; justify-content: center; background: #f7f6f0; border: 1px solid #c7c4b2; border-bottom: 0; border-radius: 2px 2px 0 0; box-sizing: border-box; }
.tab .ic { width: 13px; height: 13px; }
.tab.act { background: #fff; border-top: 2px solid #f2a02a; height: 20px; }
.tree { height: 354px; margin: 0 4px 0 1px; background: #fff; border: 2px solid #cdd6e2; box-sizing: border-box; font-size: 7px; padding: 2px 0 0 5px; flex: none; position: relative; }
.trow { display: flex; align-items: center; height: 10px; white-space: nowrap; }
.trow .ic { width: 11px; height: 11px; margin-right: 2px; }
.root .ic { margin-right: 0; }
.root span { margin-left: 1px; }
.tlist { border-left: 1px solid #e4e2d8; margin-left: 6px; height: 35px; }
.leaf { padding-left: 15px; position: relative; }
.leaf .ic.s { margin-right: 1px; }
.tl { position: absolute; left: 0; top: 5px; width: 12px; height: 1px; background: #e4e2d8; }

.col { flex: none; background: #ece9d8; }
.c1 { width: 32px; }
.c2 { width: 34px; border-right: 1px solid #8f8f88; box-sizing: border-box; }
.colin { display: flex; flex-direction: column; border-right: 1px solid #bab7a5; border-bottom: 1px solid #bab7a5; box-sizing: border-box; }
.c1 .colin { height: 362px; }
.c2 .colin { height: 338px; }
.hsep { height: 2px; background: #d3d0be; margin-left: 3px; margin-right: 3px; flex: none; }
.slot { height: 18px; display: flex; align-items: center; padding-left: 3px; flex: none; }
.c2 .slot { padding-left: 5px; }
.selbox { width: 19px; height: 19px; flex: none; margin-left: -2px; display: flex; align-items: center; justify-content: center; background: #f9bb6c; box-shadow: inset 0 0 0 1px #76542c; }
.slot.sel { height: 19px; }

.canvas { width: 599px; height: 391px; flex: none; display: block; }
.dimtext { font-size: 10px; fill: #d8d840; font-family: "Liberation Sans", sans-serif; }
.ax { font-size: 8.500px; font-family: "Liberation Sans", sans-serif; }
.ax.y { fill: #10d810; }
.ax.z { fill: #2c2ce0; }
.ax.x { fill: #e01818; }

.task { height: 19px; flex: none; display: flex; align-items: center; color: #fff; background: linear-gradient(180deg, #d6e2f6 0, #d6e2f6 5%, #3a7fea 8%, #2f72e6 18%, #245ddb 55%, #2562df 85%, #1d4ec0 95%, #1941a5 100%); }
.start { width: 61px; height: 19px; flex: none; display: flex; align-items: center; border-radius: 0 8px 8px 0; background: linear-gradient(180deg, #4d8f4e 0, #3c9a3c 15%, #3f9b3f 60%, #2e7f30 100%); box-shadow: inset -2px 0 3px #1e5a22; font-size: 11px; font-style: italic; font-weight: 700; text-shadow: 1px 1px 1px #224; }
.ic.sx { width: 11px; height: 11px; margin: 0 4px 0 7px; }
.quick { display: flex; align-items: center; width: 58px; flex: none; padding-left: 8px; gap: 3px; box-sizing: border-box; }
.quick .ic { width: 12px; height: 12px; }
.more { font-size: 8px; margin-left: 4px; margin-top: -5px; color: #d8e6fa; }
.tasks { display: flex; gap: 1px; flex: none; margin-left: 7px; }
.tbtn { width: 98px; height: 16px; box-sizing: border-box; background: #3c81f3; border-radius: 2px; display: flex; align-items: center; padding-left: 5px; font-size: 7px; color: #e8f0fc; white-space: nowrap; box-shadow: inset 1px 1px 0 #5c99f8; }
.tbtn:nth-child(5) { width: 100px; margin-left: 1px; }
.tbtn.on { background: #1e52b7; box-shadow: inset 1px 1px 1px #143a8c; }
.tbtn .ic { width: 11px; height: 11px; margin-right: 2px; }
.lang { font-size: 7.300px; margin-left: auto; width: 22px; flex: none; color: #d8e6fa; }
.tray { width: 92px; flex: none; height: 19px; display: flex; align-items: center; background: linear-gradient(180deg, #bfe0fa 0, #bfe0fa 5%, #18a0ee 10%, #1290e6 55%, #0f86de 90%, #0e6ec8 100%); box-sizing: border-box; }
.tray .ic { width: 11px; height: 11px; }
.chev { width: 11px; height: 11px; border-radius: 50%; background: #3b78e6; border: 1px solid #dbe8fb; box-sizing: border-box; font-size: 9px; line-height: 8px; text-align: center; flex: none; margin-left: -6px; margin-right: 1.500px; font-weight: 700; }
.clock { font-size: 7.300px; margin-left: 4.500px; color: #e8f4ff; }
</style>
